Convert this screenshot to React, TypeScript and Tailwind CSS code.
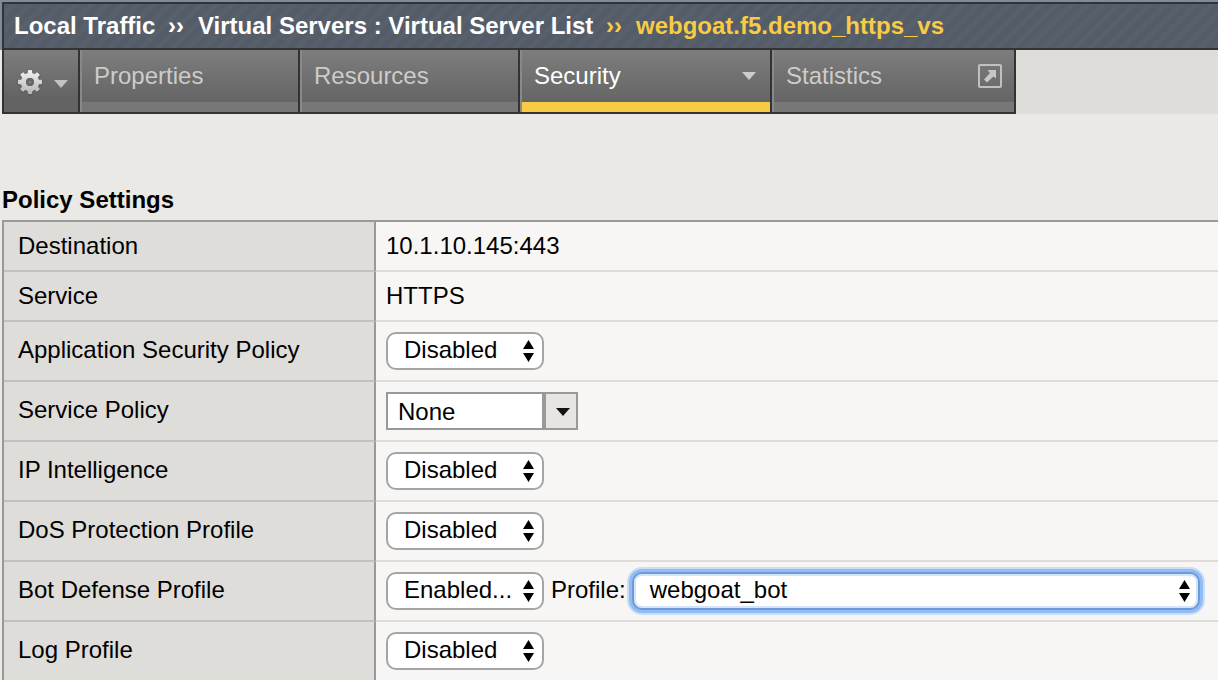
import React from "react";

function Gear() {
  return (
    <svg className="h-7 w-7 shrink-0" viewBox="0 0 28 28">
      <defs>
        <linearGradient id="gear" x1="0" y1="0" x2="0" y2="1">
          <stop offset="0.1" stopColor="#f0f0f0" />
          <stop offset="0.9" stopColor="#b8b8b8" />
        </linearGradient>
      </defs>
      <g transform="translate(14 14.8)" fill="#505050" opacity="0.4">
        <circle r="10" />
        {[0, 45, 90, 135].map((a) => (
          <rect key={a} x="-3" y="-13" width="6" height="26" rx="1.5" transform={`rotate(${a})`} />
        ))}
      </g>
      <mask id="gearMask">
        <g transform="translate(14 14)" fill="white">
          <circle r="9.2" />
          {[0, 45, 90, 135].map((a) => (
            <rect key={a} x="-2.2" y="-12" width="4.4" height="24" rx="1" transform={`rotate(${a})`} />
          ))}
          <circle r="3.9" fill="black" />
        </g>
      </mask>
      <rect width="28" height="28" fill="url(#gear)" mask="url(#gearMask)" />
      <circle cx="14" cy="14" r="3.9" fill="#666" />
      <circle cx="14" cy="14" r="1.6" fill="#7a7a7a" />
    </svg>
  );
}

function Caret({ className = "" }: { className?: string }) {
  return (
    <svg className={`h-2 w-[14px] shrink-0 ${className}`} viewBox="0 0 14 8">
      <path d="M0 0H14L7 8Z" fill="currentColor" />
    </svg>
  );
}

function Tab({ label, width, active, children }: { label: string; width: string; active?: boolean; children?: React.ReactNode }) {
  return (
    <div className={`flex h-16 ${width} shrink-0 flex-col border-r-2 border-b-2 border-[#333]`}>
      <div className="flex h-[52px] items-start border-l-2 border-[#898989] bg-linear-to-b from-[#7d7d7d] to-[#656565] pl-3">
        <span className={`mt-3 leading-7 ${active ? "text-white" : "text-[#ccc]"}`}>{label}</span>
        {children}
      </div>
      <div className={`h-[10px] border-l-2 border-[#898989] ${active ? "bg-[#f9cb45]" : "bg-[#777]"}`} />
    </div>
  );
}

function Arrows() {
  return (
    <svg className="h-[22px] w-[11px] shrink-0" viewBox="0 0 11 22">
      <path d="M5.5 0L11 9H0ZM0 13H11L5.5 22Z" fill="#000" />
    </svg>
  );
}

function Select({ value, wide }: { value: string; wide?: boolean }) {
  return (
    <div
      className={`flex h-[38px] shrink-0 items-center justify-between rounded-[10px] border-2 bg-white pr-[8px] pl-4 ${
        wide
          ? "ml-[6px] w-[568px] border-[#6d9bd8] shadow-[inset_0_0_0_2px_#d4e4fa,0_0_0_3px_#92bcf3,0_0_0_5px_#c9dcf8]"
          : "w-[158px] border-[#a5a5a5]"
      }`}
    >
      <span className="relative -top-px leading-7">{value}</span>
      <Arrows />
    </div>
  );
}

function Combo() {
  return (
    <div className="flex h-[38px] w-[192px] border-2 border-[#999] bg-white">
      <span className="flex-1 pl-[10px] leading-[35px]">None</span>
      <span className="flex w-[34px] items-center justify-center border-l-4 border-[#999] bg-[#e6e5e3] pl-[3px] text-[#111]">
        <Caret className="mt-0.5" />
      </span>
    </div>
  );
}

function Row({ label, short, children }: { label: string; short?: boolean; children: React.ReactNode }) {
  return (
    <div className={`flex shrink-0 ${short ? "h-[50px]" : "h-[60px]"}`}>
      <div className={`w-[372px] shrink-0 border-r-2 border-b-2 border-r-[#999] border-b-[#c2c1bd] bg-[#deddd9] pl-[14px] leading-7 ${short ? "pt-[10px]" : "pt-[14px]"}`}>
        {label}
      </div>
      <div className={`flex flex-1 items-start border-b-2 border-[#dddcd9] bg-[#f7f6f4] pl-[10px] ${short ? "pt-[10px] leading-7" : "pt-[10px]"}`}>
        {children}
      </div>
    </div>
  );
}

export default function App() {
  return (
    <div className="h-[680px] w-[1218px] overflow-hidden bg-[#eae9e5] font-['Liberation_Sans',Arial,sans-serif] text-2xl whitespace-nowrap text-black">
      <header className="h-[50px] bg-[#7a8c9e] pt-[2px] pl-[2px]">
        <div className="flex h-12 border-y-2 border-l-2 border-[#333] bg-[repeating-linear-gradient(135deg,#535c67_0px,#535c67_4px,#57606b_6px,#57606b_9px,#535c67_11px)] pt-2 pl-[10px] leading-7 font-bold text-white">
          <span className="w-[154px]">Local Traffic</span>
          <span className="w-[30px]">››</span>
          <span className="w-[408px]">Virtual Servers : Virtual Server List</span>
          <span className="w-[30px] text-[#f9cb45]">››</span>
          <span className="text-[#f9cb45]">webgoat.f5.demo_https_vs</span>
        </div>
      </header>

      <nav className="flex h-16 pl-[2px]">
        <div className="flex h-16 w-[78px] shrink-0 border-x-2 border-b-2 border-[#333] bg-linear-to-b from-[#7d7d7d] to-[#636363] to-80% pt-[18px] pl-[12px]">
          <Gear />
          <Caret className="mt-3 ml-[10px] text-[#c2c2c2]" />
        </div>
        <Tab label="Properties" width="w-[220px]" />
        <Tab label="Resources" width="w-[220px]" />
        <Tab label="Security" width="w-[252px]" active>
          <Caret className="mt-[22px] mr-[14px] ml-auto text-[#ccc]" />
        </Tab>
        <Tab label="Statistics" width="w-[244px]">
          <svg className="mt-[14px] mr-3 ml-auto h-6 w-6" viewBox="0 0 24 24" fill="none">
            <rect x="1" y="1" width="22" height="22" rx="1" stroke="#c0c0c0" strokeWidth="2" />
            <path d="M9.5 6H18V14.5L15.5 12.5L9 18.5L6 15.5L12 9Z" fill="#c6c6c6" />
          </svg>
        </Tab>
        <div className="flex-1 bg-[#deddd9]" />
      </nav>

      <main className="pt-[72px] pl-[2px]">
        <h1 className="h-[34px] leading-7 font-bold">Policy Settings</h1>
        <section className="border-t-2 border-l-2 border-[#999]">
          <Row label="Destination" short>10.1.10.145:443</Row>
          <Row label="Service" short>HTTPS</Row>
          <Row label="Application Security Policy"><Select value="Disabled" /></Row>
          <Row label="Service Policy"><Combo /></Row>
          <Row label="IP Intelligence"><Select value="Disabled" /></Row>
          <Row label="DoS Protection Profile"><Select value="Disabled" /></Row>
          <Row label="Bot Defense Profile">
            <Select value="Enabled..." />
            <span className="ml-[7px] pt-1 leading-7">Profile:</span>
            <Select value="webgoat_bot" wide />
          </Row>
          <Row label="Log Profile"><Select value="Disabled" /></Row>
        </section>
      </main>
    </div>
  );
}
